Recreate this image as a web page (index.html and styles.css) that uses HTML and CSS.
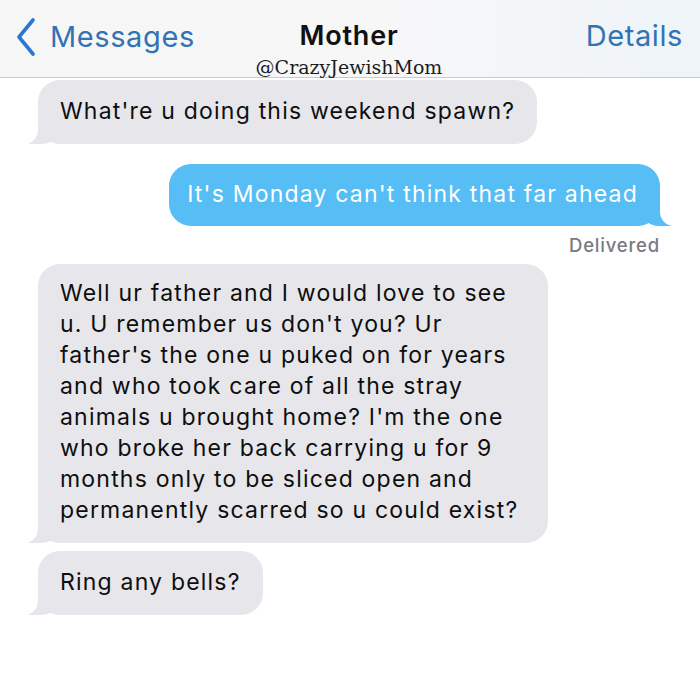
FILE: index.html
```html
<!DOCTYPE html>
<html lang="en">
<head>
    <meta charset="UTF-8">
    <title>Mother</title>
    <link rel="stylesheet" href="styles.css">
</head>
<body>
    <div class="nav">
        <div class="back">
            <svg class="chevron" width="22" height="40" viewBox="0 0 22 40">
                <polyline points="18,3 4,20 18,37" fill="none" stroke="#2a78cf" stroke-width="3.6" stroke-linecap="round" stroke-linejoin="round"/>
            </svg>
            <span>Messages</span>
        </div>
        <div class="title">
            <div class="name">Mother</div>
            <div class="handle">@CrazyJewishMom</div>
        </div>
        <div class="details">Details</div>
    </div>

    <div class="chat">
        <div class="row in">
            <div class="bubble">What're u doing this weekend spawn?</div>
        </div>
        <div class="row out">
            <div class="bubble">It's Monday can't think that far ahead</div>
        </div>
        <div class="status">Delivered</div>
        <div class="row in">
            <div class="bubble long">Well ur father and I would love to see<br>u. U remember us don't you? Ur<br>father's the one u puked on for years<br>and who took care of all the stray<br>animals u brought home? I'm the one<br>who broke her back carrying u for 9<br>months only to be sliced open and<br>permanently scarred so u could exist?</div>
        </div>
        <div class="row in tight">
            <div class="bubble">Ring any bells?</div>
        </div>
    </div>
</body>
</html>
```
FILE: styles.css
```css
body{margin:0;background:#fff;font-family:"Inter","Liberation Sans",sans-serif;}

/* top bar */
.nav{
    display:grid;
    grid-template-columns:1fr auto 1fr;
    align-items:start;
    height:77px;
    padding:0 17px 0 15px;
    background:linear-gradient(90deg,#f6f6f6 0%,#f7f7f8 55%,#eef4f8 100%);
    border-bottom:1px solid #cbcbce;
}
.back{display:flex;align-items:center;gap:13px;padding-top:17px;color:#3273b4;font-size:29px;letter-spacing:0.6px;line-height:36px;}
.chevron{display:block;}
.title{text-align:center;padding-top:18px;}
.name{font-size:27px;font-weight:600;letter-spacing:0.8px;line-height:36px;color:#111;}
.handle{font-family:"DejaVu Serif","Liberation Serif",serif;font-size:19px;line-height:22px;margin-top:2px;color:#1c1c1c;}
.details{justify-self:end;padding-top:18px;color:#3273b4;font-size:29px;letter-spacing:0.6px;line-height:36px;}

/* messages */
.chat{padding:2px 40px 0 38px;}
.row{display:flex;margin-bottom:20px;}
.row.in{justify-content:flex-start;}
.row.out{justify-content:flex-end;margin-bottom:0;}
.row.tight{margin-top:-12px;}

.bubble{
    position:relative;
    padding:16px 22px 17px 22px;
    border-radius:22px;
    font-size:23px;
    line-height:31px;
    letter-spacing:1.2px;
    white-space:nowrap;
}
.in .bubble{background:#e6e6eb;color:#0e0e0e;}
.out .bubble{background:#57bdf5;color:#fff;padding:15px 22px 16px 18px;}
.in .bubble.long{padding:14px 30px 17px 22px;}

/* bubble tails */
.bubble::before,.bubble::after{content:"";position:absolute;bottom:0;height:22px;}
.in .bubble::before{left:-9px;width:30px;background:#e6e6eb;border-bottom-right-radius:18px 16px;}
.in .bubble::after{left:-22px;width:22px;background:#fff;border-bottom-right-radius:14px;}
.out .bubble::before{right:-11px;width:30px;background:#57bdf5;border-bottom-left-radius:18px 16px;}
.out .bubble::after{right:-24px;width:24px;background:#fff;border-bottom-left-radius:14px;}

.status{text-align:right;margin:6px 0 6px;font-size:18.5px;line-height:26px;letter-spacing:0.8px;color:#7b7b7f;font-weight:500;}
```
